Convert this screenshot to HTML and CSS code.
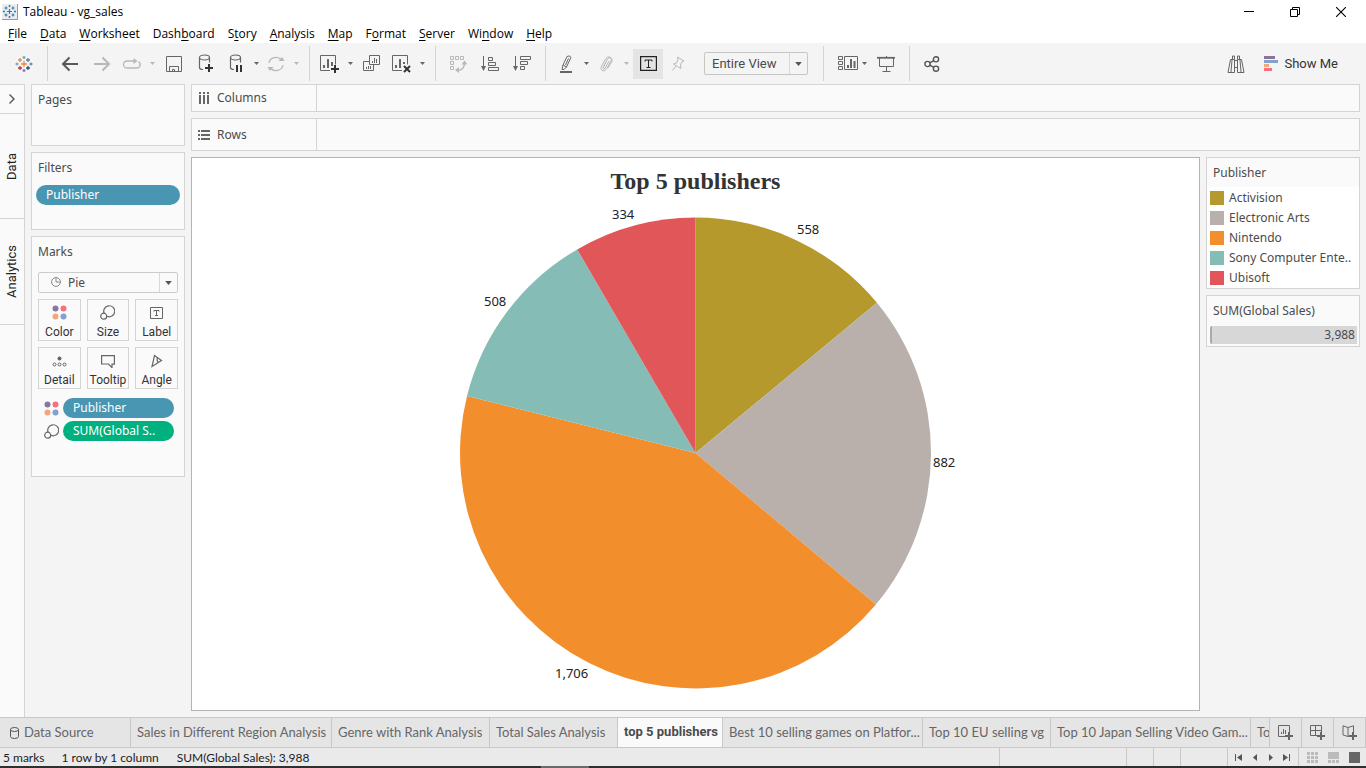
FILE: index.html
```html
<!DOCTYPE html>
<html lang="en">
<head>
<meta charset="utf-8">
<title>Tableau - vg_sales</title>
<link rel="stylesheet" href="styles.css">
</head>
<body>
<svg class="defs" width="0" height="0" aria-hidden="true">
  <symbol id="caret" viewBox="0 0 5 3"><path d="M0 0h5L2.500 3z" fill="currentColor"/></symbol>
  <symbol id="dots" viewBox="0 0 15 15"><circle cx="3.500" cy="3.500" r="3" fill="#8a74a0"/><circle cx="11.500" cy="3.500" r="3" fill="#f8707e"/><circle cx="3.500" cy="11.500" r="3" fill="#f3a77b"/><circle cx="11.500" cy="11.500" r="3" fill="#7fa3cc"/></symbol>
  <symbol id="size" viewBox="0 0 15 15"><g fill="none" stroke="#666" stroke-width="1.200"><path d="M4.200 8.500A5.500 5.500 0 1 1 7 11.300"/><circle cx="3.700" cy="11.200" r="3"/></g></symbol>
  <symbol id="logo" viewBox="0 0 18 18"><g fill="none" stroke-width="1.300">
    <path stroke="#eb8a3c" d="M9 6v6M6 9h6"/><path stroke="#e0954a" d="M5 3v4M3 5h4"/><path stroke="#5b879b" d="M13 3v4M11 5h4"/><path stroke="#c4314b" d="M5 11v4M3 13h4"/><path stroke="#2c5286" d="M13 11v4M11 13h4"/>
    <path stroke="#7ba7b0" d="M9 1v3M7.500 2.500h3M2 7.500v3M.5 9h3"/><path stroke="#7782ab" d="M16 7.500v3M14.500 9h3M9 14v3M7.500 15.500h3"/></g></symbol>
</svg>

<header class="titlebar">
  <svg class="app-icon" width="16" height="16" viewBox="0 0 16 16"><path fill="#ececec" d="M0 0h16v16H0z"/><path d="M15.500 0v15.500H0" fill="none" stroke="#999"/><path stroke="#2f7fb5" stroke-width="1.200" fill="none" d="M7.500 5v5M5 7.500h5M4 2.500v3M2.500 4h3M11 2.500v3M9.500 4h3M4 9.500v3M2.500 11h3M11 9.500v3M9.500 11h3M7.500 1v2M6.500 2h2M7.500 12v2M6.500 13h2M2 6.500v2M1 7.500h2M13 6.500v2M12 7.500h2"/></svg>
  <h1 class="app-title">Tableau - vg_sales</h1>
  <div class="window-buttons">
    <button aria-label="Minimize"><svg width="10" height="10"><path d="M0 4.500h10" stroke="#000"/></svg></button>
    <button aria-label="Restore"><svg width="10" height="10" fill="none" stroke="#000"><path d="M.5 2.500h7v7h-7zM2.500 2.500v-2h7v7h-2"/></svg></button>
    <button aria-label="Close"><svg width="10" height="10" fill="none" stroke="#000" stroke-width="1.100"><path d="M0 0l10 10M10 0L0 10"/></svg></button>
  </div>
</header>

<nav class="menubar">
  <a href="#"><u>F</u>ile</a><a href="#"><u>D</u>ata</a><a href="#"><u>W</u>orksheet</a><a href="#">Dash<u>b</u>oard</a><a href="#">S<u>t</u>ory</a><a href="#"><u>A</u>nalysis</a><a href="#"><u>M</u>ap</a><a href="#">F<u>o</u>rmat</a><a href="#"><u>S</u>erver</a><a href="#">Wi<u>n</u>dow</a><a href="#"><u>H</u>elp</a>
</nav>

<div class="toolbar" role="toolbar" aria-label="Worksheet tools">
  <button class="tool home" aria-label="Start page"><svg width="18" height="18"><use href="#logo"/></svg></button>
  <span class="sep first"></span>
  <button class="tool" aria-label="Undo"><svg width="18" height="16" fill="none" stroke="#595959" stroke-width="2"><path d="M2 8h15M8.500 1.500L2 8l6.500 6.500"/></svg></button>
  <button class="tool off" aria-label="Redo"><svg width="18" height="16" fill="none" stroke="currentColor" stroke-width="2"><path d="M1 8h15M9.500 1.500L16 8l-6.500 6.500"/></svg></button>
  <button class="tool narrow off" aria-label="Replay"><svg width="20" height="12" fill="none" stroke="currentColor" stroke-width="1.300"><path d="M12 3H5a3.500 3.500 0 0 0 0 7h10a3.500 3.500 0 0 0 1.500-6.500"/><path d="M11.500 0v6L15.500 3z" fill="currentColor" stroke="none"/></svg></button>
  <button class="drop off" aria-label="Replay options"><svg width="5" height="3"><use href="#caret"/></svg></button>
  <button class="tool" aria-label="Save"><svg width="16" height="16" fill="none" stroke="#666"><path d="M.5.5h15v15H.5zM3.500 15.500v-5h9v5M6.500 15.500v-2h2v2"/></svg></button>
  <button class="tool" aria-label="New data source"><svg width="16" height="19" fill="none" stroke="#666" stroke-width="1.200"><ellipse cx="6.500" cy="3.500" rx="5" ry="2.500"/><path d="M1.500 3.500v10q0 2 3.500 2M11.500 3.500v5"/><path stroke="#333" stroke-width="2" d="M11 10v8M7 14h8"/></svg></button>
  <button class="tool narrow" aria-label="Pause updates"><svg width="14" height="19" fill="none" stroke="#666" stroke-width="1.200"><ellipse cx="6.500" cy="3.500" rx="5" ry="2.500"/><path d="M1.500 3.500v10q0 2 3.500 2M11.500 3.500v5"/><path stroke="#333" stroke-width="2" d="M8 11v7M12 11v7"/></svg></button>
  <button class="drop" aria-label="Pause options"><svg width="5" height="3"><use href="#caret"/></svg></button>
  <button class="tool narrow off" aria-label="Refresh"><svg width="18" height="16" fill="none" stroke="currentColor" stroke-width="1.300"><path d="M2 7a7 6.500 0 0 1 12.500-3M16 9a7 6.500 0 0 1-12.500 3"/><path d="M11.500 5h6L15 1zM.5 11h6L3 15z" fill="currentColor" stroke="none"/></svg></button>
  <button class="drop off" aria-label="Refresh options"><svg width="5" height="3"><use href="#caret"/></svg></button>
  <span class="sep"></span>
  <button class="tool narrow" aria-label="New worksheet"><svg width="20" height="18" fill="none" stroke="#666"><path d="M10 15.500H.5V.5h15v9"/><path stroke-width="2" d="M4 13v-3M8 13V4M12 11V7"/><path stroke="#333" stroke-width="2" d="M15 10v8M11 14h8"/></svg></button>
  <button class="drop" aria-label="New worksheet options"><svg width="5" height="3"><use href="#caret"/></svg></button>
  <button class="tool" aria-label="Duplicate"><svg width="18" height="17" fill="none" stroke="#666"><path d="M6.500.5h10v9h-10zM6.500 6.500h-6v9h10v-6M3.500 14v-2M5.500 14v-3M7.500 14v-3M9.500 8V6M11.500 8V3M13.500 8V4"/></svg></button>
  <button class="tool narrow" aria-label="Clear sheet"><svg width="20" height="18" fill="none" stroke="#666"><path d="M10 15.500H.5V.5h15v9"/><path stroke-width="2" d="M4 13v-3M8 13V4M12 9V7"/><path stroke="#333" stroke-width="2" d="M12 11l6 6M18 11l-6 6"/></svg></button>
  <button class="drop" aria-label="Clear options"><svg width="5" height="3"><use href="#caret"/></svg></button>
  <span class="sep"></span>
  <button class="tool off" aria-label="Swap rows and columns"><svg width="18" height="18" fill="none" stroke="currentColor"><path d="M1.500 1.500h3v3h-3zM6.500 1.500h3v3h-3zM11.500 1.500h3v3h-3zM1.500 6.500h3v3h-3zM1.500 11.500h3v3h-3z"/><path stroke-width="1.400" d="M15.500 8q0 7-7 7.500"/><path d="M12.500 9.500h6l-3-4zM10 12v6l-4-3z" fill="currentColor" stroke="none"/></svg></button>
  <button class="tool" aria-label="Sort ascending"><svg width="18" height="15" fill="none" stroke="#666"><path d="M2.500 0v12"/><path d="M0 10h5l-2.500 5z" fill="#666" stroke="none"/><path d="M7.500 1.500h4v3h-4zM7.500 6.500h7v3h-7zM7.500 11.500h10v3h-10z"/></svg></button>
  <button class="tool" aria-label="Sort descending"><svg width="18" height="15" fill="none" stroke="#666"><path d="M2.500 0v12"/><path d="M0 10h5l-2.500 5z" fill="#666" stroke="none"/><path d="M7.500 .5h10v3h-10zM7.500 5.500h7v3h-7zM7.500 10.500h4v3h-4z"/></svg></button>
  <span class="sep"></span>
  <button class="tool narrow" aria-label="Highlight"><svg width="12" height="18" fill="none" stroke="#666"><path d="M7 1.500q2.500-1.500 4 .8L6.500 12 4 14.500H2L3 10zM3 10l3.500 2M8.500 3.500l-3 6.500"/><path stroke-width="2" d="M0 17h12"/></svg></button>
  <button class="drop" aria-label="Highlight options"><svg width="5" height="3"><use href="#caret"/></svg></button>
  <button class="tool narrow off" aria-label="Group members"><svg width="13" height="16" fill="none" stroke="currentColor"><path d="M3.500 10.500L7.500 3q2-2.500 3.500-.5.800 1 0 2.500L6.500 13q-2 3-4.500 1.500-2-1.500-.5-4.500L5 4q2.500-4.500 5-3t2 4L8 12M6 6l-3 6q0 2 2 .5L9 5"/></svg></button>
  <button class="drop off" aria-label="Group options"><svg width="5" height="3"><use href="#caret"/></svg></button>
  <button class="tool toggled" aria-label="Show mark labels" aria-pressed="true"><svg width="17" height="15" fill="none" stroke="#222"><path stroke-width="1.200" d="M.6.6h15.800v13.800H.6z"/><path d="M5 5.500v-1.500h7v1.500M8.500 4v7.500M6.500 11.500h4"/></svg></button>
  <button class="tool narrow off" aria-label="Fix axes"><svg width="14" height="15" fill="none" stroke="currentColor"><path d="M6.500 1l6.500 4-2 .5-1.500 3.500.5 3.500-3.500-2-4-2.500 3-1L7 3.500zM5 10l-3.500 4.500"/></svg></button>
  <label class="fit"><select aria-label="Fit"><option>Entire View</option><option>Standard</option></select><span class="arrow"><svg width="7" height="4"><use href="#caret"/></svg></span></label>
  <span class="sep"></span>
  <button class="tool narrow cards-tool" aria-label="Show or hide cards"><svg width="20" height="15" fill="none" stroke="#666"><path d="M.5.500h4v3h-4zM.5 5.500h4v3h-4zM.5 10.500h4v3h-4zM6.500 .5h13v13h-13z"/><path stroke-width="2" d="M10 12V9M13 12V3M16.500 12V5"/></svg></button>
  <button class="drop" aria-label="Card options"><svg width="5" height="3"><use href="#caret"/></svg></button>
  <button class="tool" aria-label="Presentation mode"><svg width="18" height="16" fill="none" stroke="#666"><path stroke-width="1.800" d="M0 1.800h18"/><path d="M2.500 2v8.500h14V2M9.500 0v1M9.500 11v4M5.500 15.500h8"/></svg></button>
  <span class="sep"></span>
  <button class="tool" aria-label="Share"><svg width="16" height="16" fill="none" stroke="#555" stroke-width="1.400"><circle cx="3.500" cy="8" r="2.600"/><circle cx="12" cy="3.300" r="2.600"/><circle cx="12" cy="12.700" r="2.600"/><path d="M5.800 6.800l4-2.200M5.800 9.200l4 2.200"/></svg></button>
  <button class="tool find" aria-label="Find"><svg width="18" height="18" fill="none" stroke="#666"><path d="M1 17.500L3.500 4.500h4v13zM17 17.500L14.500 4.500h-4v13zM5.500 4.500V1h2v3.500M10.500 4.500V1h2v3.500M7.500 5.500h3M7.500 12.500h3M5 5l-1 12M13 5l1 12"/></svg></button>
  <button class="showme"><svg width="14" height="15"><path fill="#8b739c" d="M0 0h11v3H0z"/><path fill="#7fa3cc" d="M0 4h14v3H0z"/><path fill="#f3a77b" d="M0 8h5v3H0z"/><path fill="#f8707e" d="M0 12h8v3H0z"/></svg>Show Me</button>
</div>

<main class="workspace">
  <aside class="rail">
    <button class="expand" aria-label="Expand pane"><svg width="6" height="10" fill="none" stroke="#555" stroke-width="1.400"><path d="M.5.500L5 5 .5 9.500"/></svg></button>
    <button class="side-tab"><span>Data</span></button>
    <button class="side-tab"><span>Analytics</span></button>
  </aside>

  <div class="shelves">
    <section class="panel pages"><h2>Pages</h2></section>
    <section class="panel filters"><h2>Filters</h2><button class="pill blue">Publisher</button></section>
    <section class="panel marks">
      <h2>Marks</h2>
      <label class="mark-type">
        <svg class="pie-icon" width="10" height="10" fill="none" stroke="#888"><circle cx="5" cy="5" r="4.400"/><path d="M5 .5V5h4.500"/></svg>
        <select aria-label="Mark type"><option>Pie</option><option>Bar</option></select><span class="arrow"><svg width="7" height="4"><use href="#caret"/></svg></span></label>
      <div class="mark-grid">
        <button><svg width="15" height="15"><use href="#dots"/></svg>Color</button>
        <button><svg width="15" height="15"><use href="#size"/></svg>Size</button>
        <button><svg width="13" height="15" fill="none" stroke="#666"><path d="M.5 2.500h12v11H.5zM4 6.500v-1h5v1M6.500 5.500v5M5 10.500h3"/></svg>Label</button>
        <button><svg width="15" height="15" fill="none" stroke="#666"><circle cx="7.500" cy="5.500" r="2" fill="#666" stroke="none"/><circle cx="2.500" cy="11.500" r="1.500"/><circle cx="7.500" cy="11.500" r="1.500"/><circle cx="12.500" cy="11.500" r="1.500"/></svg>Detail</button>
        <button><svg width="14" height="15" fill="none" stroke="#666" stroke-width="1.200"><path d="M.6 2.600h12.800v8.500H11v3.500L7.500 11H.6z"/></svg>Tooltip</button>
        <button><svg width="12" height="15" fill="none" stroke="#666" stroke-width="1.200"><path d="M1 13.500L3.500 2.500l7 5zM6.500 4.500q-1.200 3.500 1 5"/></svg>Angle</button>
      </div>
      <div class="mark-row"><svg width="15" height="15"><use href="#dots"/></svg><button class="pill blue">Publisher</button></div>
      <div class="mark-row"><svg width="15" height="15"><use href="#size"/></svg><button class="pill green">SUM(Global S..</button></div>
    </section>
  </div>

  <div class="canvas">
    <section class="shelf columns"><h2><svg width="12" height="12"><path fill="#666" d="M1 0h2v2H1zM5 0h2v2H5zM9 0h2v2H9zM1 3h2v9H1zM5 3h2v9H5zM9 3h2v9H9z"/></svg>Columns</h2></section>
    <section class="shelf rows"><h2><svg width="12" height="12"><path fill="#666" d="M0 1h2v2H0zM0 5h2v2H0zM0 9h2v2H0zM3 1h9v2H3zM3 5h9v2H3zM3 9h9v2H3z"/></svg>Rows</h2></section>
    <div class="stage">
      <section class="view">
        <h2 class="view-title">Top 5 publishers</h2>
        <svg class="pie" viewBox="0 0 1007 506" role="img" aria-label="Global sales by publisher">
          <path fill="#b5992d" d="M503.500 249V13.500A235.500 235.500 0 0 1 684.900 98.800z"/>
          <path fill="#bab0ab" d="M503.500 249L684.900 98.800A235.500 235.500 0 0 1 683.900 400.400z"/>
          <path fill="#f38e2c" d="M503.500 249L683.900 400.400A235.500 235.500 0 0 1 275 192.100z"/>
          <path fill="#86bcb6" d="M503.500 249L275 192.100A235.500 235.500 0 0 1 385.200 45.400z"/>
          <path fill="#e15759" d="M503.500 249L385.200 45.400A235.500 235.500 0 0 1 503.500 13.500z"/>
          <text x="605" y="30">558</text><text x="741" y="263">882</text><text x="363" y="474">1,706</text><text x="292" y="102">508</text><text x="420" y="15">334</text>
        </svg>
      </section>
      <aside class="cards">
        <section class="card"><h2>Publisher</h2>
          <ul class="legend">
            <li><i class="swatch gold"></i>Activision</li>
            <li><i class="swatch gray"></i>Electronic Arts</li>
            <li><i class="swatch orange"></i>Nintendo</li>
            <li><i class="swatch teal"></i>Sony Computer Ente..</li>
            <li><i class="swatch red"></i>Ubisoft</li>
          </ul>
        </section>
        <section class="card"><h2>SUM(Global Sales)</h2><div class="size-bar">3,988</div></section>
      </aside>
    </div>
  </div>
</main>

<nav class="tabs">
  <a href="#" class="tab source"><svg width="9" height="12" fill="none" stroke="#555"><ellipse cx="4.500" cy="2.500" rx="4" ry="2"/><path d="M.5 2.500v7q0 2 4 2t4-2v-7"/></svg>Data Source</a>
  <a href="#" class="tab wide">Sales in Different Region Analysis</a>
  <a href="#" class="tab medium">Genre with Rank Analysis</a>
  <a href="#" class="tab small">Total Sales Analysis</a>
  <a href="#" class="tab active" aria-current="page">top 5 publishers</a>
  <a href="#" class="tab wide">Best 10 selling games on Platfor...</a>
  <a href="#" class="tab small">Top 10 EU selling vg</a>
  <a href="#" class="tab wide">Top 10 Japan Selling Video Gam...</a>
  <a href="#" class="tab cut">To</a>
  <button aria-label="New worksheet tab"><svg width="16" height="15" fill="none" stroke="#666"><path d="M8 11.500H.5V.5h11v7M3.500 9V7M5.500 9V4M7.500 9V5"/><path stroke-width="2" d="M11 7v8M7 11h8"/></svg></button>
  <button aria-label="New dashboard"><svg width="16" height="15" fill="none" stroke="#666"><path d="M8 10.500H.5V.5h11v7M5.500 .5v10M.5 5.500h11"/><path stroke-width="2" d="M11 7v8M7 11h8"/></svg></button>
  <button aria-label="New story"><svg width="16" height="15" fill="none" stroke="#666"><path d="M8 10.500l-2 1-5-1.500V.8l5 1.700L11.500.8v6.500M6 2.500v9"/><path stroke-width="2" d="M11 7v8M7 11h8"/></svg></button>
</nav>

<footer class="status">
  <span class="s1">5 marks</span><span class="s2">1 row by 1 column</span><span class="s3">SUM(Global Sales): 3,988</span>
  <span class="cell c1"></span><span class="cell c2"></span><span class="cell c2"></span><span class="cell c3"></span>
  <div class="cell pager">
    <button aria-label="First"><svg width="8" height="7" fill="#555"><path d="M0 0h1v7H0zM7 0v7L2 3.500z"/></svg></button>
    <button aria-label="Previous"><svg width="8" height="7" fill="#555"><path d="M6 0v7L2 3.500z"/></svg></button>
    <button aria-label="Next"><svg width="8" height="7" fill="#555"><path d="M2 0v7L6 3.500z"/></svg></button>
    <button aria-label="Last"><svg width="8" height="7" fill="#555"><path d="M6 0h1v7H6zM0 0v7L5 3.500z"/></svg></button>
  </div>
  <div class="cell modes">
    <button aria-label="Show tabs as grid"><svg width="11" height="11" fill="#bbb"><path d="M0 0h3v3H0zM4 0h3v3H4zM8 0h3v3H8zM0 4h3v3H0zM4 4h3v3H4zM8 4h3v3H8zM0 8h3v3H0zM4 8h3v3H4zM8 8h3v3H8z"/></svg></button>
    <button aria-label="Show filmstrip"><svg width="11" height="11" fill="#bbb"><path d="M0 0h11v7H0zM0 8h3v3H0zM4 8h3v3H4zM8 8h3v3H8z"/></svg></button>
    <button aria-label="Show tabs"><svg width="11" height="11"><path fill="#666" d="M0 0h11v11H0z"/></svg></button>
  </div>
</footer>
<div class="taskbar"><span></span></div>
</body>
</html>
```
FILE: styles.css
```css
* { box-sizing: border-box; }
html, body { height: 100%; }
body {
  margin: 0;
  display: flex;
  flex-direction: column;
  overflow: hidden;
  background: #f4f4f4;
  color: #4b4b4b;
  font: 12px/16px "Noto Sans", "Open Sans", sans-serif;
}
h1, h2 { margin: 0; font-size: inherit; font-weight: inherit; }
a { color: inherit; text-decoration: none; }
button, select { margin: 0; padding: 0; border: 0; background: none; font: inherit; color: inherit; }
svg { display: block; flex: none; }
.defs { position: absolute; }

.titlebar { display: flex; align-items: center; height: 23px; padding-left: 2px; background: #fff; flex: none; }
.app-title { margin-left: 5px; color: #000; font: 12px/16px "Open Sans", sans-serif; }
.window-buttons { display: flex; margin-left: auto; padding-right: 2px; }
.window-buttons button { display: grid; place-items: center; width: 46px; height: 20px; }

.menubar { display: flex; gap: 13px; height: 20px; padding: 2px 8px 0; background: #fff; color: #000; font: 12px/17px "Open Sans", sans-serif; flex: none; }
.menubar u { text-underline-offset: 2px; }

.toolbar { display: flex; align-items: center; height: 41px; flex: none; color: #666; }
.tool { display: grid; place-items: center; width: 32px; height: 30px; }
.tool.home { width: 47px; }
.tool.narrow { width: 28px; }
.tool.toggled { width: 30px; margin: 0 1px; background: #e4e4e4; }
.tool.find { margin-left: auto; }
.tool.cards-tool { justify-items: end; }
.off { color: #b8b8b8; }
.drop { display: grid; place-items: center; width: 12px; height: 30px; }
.sep { width: 1px; height: 35px; margin: 0 6px 0 7px; background: #d4d4d4; }
.sep.first { margin-left: 0; }
.fit { position: relative; width: 104px; height: 23px; margin: 0 8px 0 12px; border: 1px solid #c6c6c6; border-radius: 2px; }
.fit select, .mark-type select { width: 100%; height: 100%; appearance: none; }
.fit select { padding-left: 7px; font: 13px/20px Roboto, sans-serif; color: #4b4b4b; }
.arrow { position: absolute; top: 0; right: 0; bottom: 0; display: grid; place-items: center; width: 18px; border-left: 1px solid #d8d8d8; color: #555; pointer-events: none; }
.showme { display: flex; align-items: center; gap: 6px; margin: 0 28px 0 12px; color: #333; font: 13px/20px Roboto, sans-serif; }

.workspace { display: flex; flex: 1; min-height: 0; gap: 6px; padding-right: 6px; }
.rail { display: flex; flex-direction: column; width: 25px; border: 1px solid #d4d4d4; border-width: 1px 1px 0 0; background: #fafafa; }
.expand { display: grid; place-items: center; height: 29px; border-bottom: 1px solid #d4d4d4; }
.side-tab { display: grid; place-items: center; height: 105px; border-bottom: 1px solid #d4d4d4; color: #222; font: 13px/20px Roboto, sans-serif; }
.side-tab + .side-tab { height: 106px; }
.side-tab span { writing-mode: vertical-rl; transform: rotate(180deg); }

.shelves { display: flex; flex-direction: column; gap: 6px; width: 154px; }
.panel, .shelf, .card { border: 1px solid #d4d4d4; background: #fafafa; }
.panel { padding: 7px 6px; }
.pages { min-height: 62px; }
.filters { min-height: 78px; }
.marks { min-height: 241px; }
.filters .pill { width: 144px; margin: 9px 0 0 -2px; }
.pill { display: block; height: 20px; padding: 0 10px; border-radius: 10px; color: #fff; text-align: left; line-height: 20px; }
.blue { background: #4996b2; }
.green { background: #00b180; }
.mark-type { position: relative; display: block; height: 21px; margin-top: 12px; border: 1px solid #ccc; border-radius: 2px; }
.mark-type select { padding-left: 29px; }
.pie-icon { position: absolute; top: 4px; left: 12px; }
.mark-grid { display: grid; grid-template-columns: repeat(3, 1fr); gap: 6px; margin: 6px 0 9px; }
.mark-grid button { display: flex; flex-direction: column; align-items: center; gap: 4px; height: 42px; padding-top: 5px; border: 1px solid #d4d4d4; color: #333; font: 12px/16px Roboto, sans-serif; }
.mark-row { display: flex; align-items: center; gap: 4px; margin: 0 4px 3px 6px; }
.mark-row .pill { flex: 1; }

.canvas { display: flex; flex: 1; flex-direction: column; gap: 6px; min-width: 0; }
.shelf { display: flex; }
.columns { height: 28px; }
.rows { height: 33px; }
.shelf h2 { display: flex; align-items: center; gap: 7px; width: 125px; padding-left: 6px; border-right: 1px solid #d4d4d4; }
.stage { display: flex; flex: 1; gap: 6px; min-height: 0; padding-bottom: 6px; }
.view { display: flex; flex: 1; flex-direction: column; min-width: 0; border: 1px solid #b4b4b4; background: #fff; }
.view-title { padding: 8px 0; color: #333; text-align: center; font: bold 24px/30px "Liberation Serif", serif; }
.pie { flex: 1; width: 100%; min-height: 0; font-size: 13px; fill: #222; }
.cards { display: flex; flex-direction: column; gap: 6px; width: 154px; }
.card h2 { padding: 7px 6px 6px; }
.legend { margin: 0; padding: 1px 3px 0; list-style: none; background: #fff; }
.legend li { display: flex; align-items: center; gap: 5px; height: 20px; white-space: nowrap; }
.swatch { width: 14px; height: 14px; }
.gold { background: #b5992d; }
.gray { background: #bab0ab; }
.orange { background: #f38e2c; }
.teal { background: #86bcb6; }
.red { background: #e15759; }
.size-bar { height: 18px; margin: 1px 2px 2px 3px; padding-right: 2px; border-left: 2px solid #aaa; border-radius: 2px 0 0 2px; background: #d7d7d7; text-align: right; line-height: 18px; }

.tabs { display: flex; height: 31px; flex: none; border: 1px solid #c8c8c8; border-width: 1px 0; background: #e5e5e5; color: #666; font: 13px/29px Lato, sans-serif; }
.tab { flex: none; padding-left: 6px; border-right: 1px solid #c8c8c8; white-space: nowrap; overflow: hidden; }
.source { display: flex; align-items: center; gap: 5px; width: 131px; padding-left: 10px; }
.wide { width: 200px; }
.source + .wide { width: 201px; }
.medium { width: 158px; }
.small { width: 128px; }
.active { width: 105px; background: #fafafa; color: #4b4b4b; font: bold 13px/27px Roboto, sans-serif; }
.cut { flex: 1; min-width: 0; }
.tabs button { display: grid; place-items: center; width: 32px; border-right: 1px solid #c8c8c8; }

.status { display: flex; height: 18px; flex: none; padding-left: 3px; background: #eaeaea; color: #222; font: 12px/20px Lato, sans-serif; }
.s2 { margin-left: 17px; }
.s3 { margin-left: 18px; }
.cell { display: flex; align-items: center; border-left: 1px solid #c8c8c8; }
.c1 { width: 127px; margin-left: auto; }
.c2 { width: 27px; }
.c3 { width: 47px; }
.pager { width: 71px; gap: 8px; padding-left: 7px; }
.modes { width: 68px; gap: 10px; padding-left: 8px; }
.taskbar { height: 2px; flex: none; background: #2f2f2f; }
.taskbar span { display: block; width: 48px; height: 2px; margin-left: 39.600%; background: #6a6a6a; }
```
